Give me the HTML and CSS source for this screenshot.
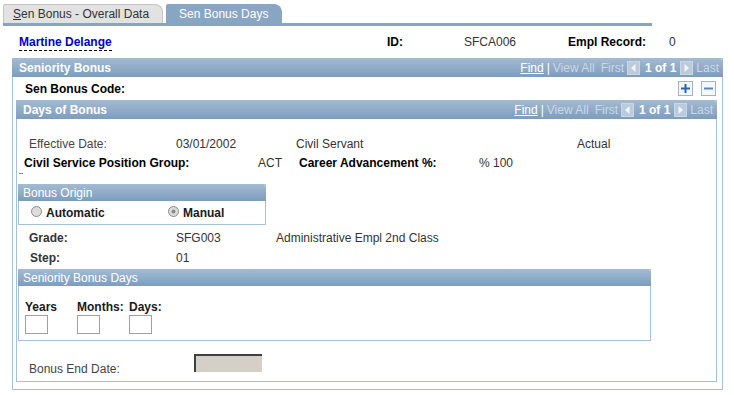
FILE: index.html
```html
<!DOCTYPE html>
<html>
<head>
  <title>Sen Bonus Days</title>
  <link rel="stylesheet" href="styles.css">
</head>
<body>
  <div class="tabs">
    <div class="tab"><u>S</u>en Bonus - Overall Data</div>
    <div class="tab active">Sen Bonus Days</div>
  </div>
  <div class="tabbar"></div>

  <div class="keyrow">
    <span class="key-name"><a class="name">Martine Delange</a></span>
    <span class="key-id lbl">ID:</span>
    <span class="key-idv">SFCA006</span>
    <span class="key-rec lbl">Empl Record:</span>
    <span>0</span>
  </div>

  <div class="box outer">
    <div class="hdr">
      <span>Seniority Bonus</span>
      <span class="nav">
        <a class="find">Find</a><span class="sep">|</span><span class="dim">View All</span>
        <span class="dim first">First</span>
        <svg class="arr" width="13" height="14" viewBox="0 0 13 14"><rect x="0.5" y="0.5" width="12" height="13" fill="#bccbdb" stroke="#cbd7e4"/><polygon points="8.5,3 8.5,11 4,7" fill="#f2f6fa"/></svg>
        <b class="count">1 of 1</b>
        <svg class="arr" width="13" height="14" viewBox="0 0 13 14"><rect x="0.5" y="0.5" width="12" height="13" fill="#bccbdb" stroke="#cbd7e4"/><polygon points="4.5,3 4.5,11 9,7" fill="#f2f6fa"/></svg>
        <span class="dim last">Last</span>
      </span>
    </div>
    <div class="coderow">
      <span class="lbl">Sen Bonus Code:</span>
      <span class="btns">
        <svg width="15" height="15" viewBox="0 0 15 15"><rect x="0.5" y="0.5" width="14" height="14" fill="#f4f7fa" stroke="#9fb4c8"/><rect x="3" y="6.5" width="9" height="2" fill="#2e64a8"/><rect x="6.5" y="3" width="2" height="9" fill="#2e64a8"/></svg>
        <svg width="15" height="15" viewBox="0 0 15 15"><rect x="0.5" y="0.5" width="14" height="14" fill="#f4f7fa" stroke="#9fb4c8"/><rect x="3" y="6.5" width="9" height="2" fill="#5a86b8"/></svg>
      </span>
    </div>

    <div class="box inner">
      <div class="hdr">
        <span>Days of Bonus</span>
        <span class="nav">
          <a class="find">Find</a><span class="sep">|</span><span class="dim">View All</span>
          <span class="dim first">First</span>
          <svg class="arr" width="13" height="14" viewBox="0 0 13 14"><rect x="0.5" y="0.5" width="12" height="13" fill="#bccbdb" stroke="#cbd7e4"/><polygon points="8.5,3 8.5,11 4,7" fill="#f2f6fa"/></svg>
          <b class="count">1 of 1</b>
          <svg class="arr" width="13" height="14" viewBox="0 0 13 14"><rect x="0.5" y="0.5" width="12" height="13" fill="#bccbdb" stroke="#cbd7e4"/><polygon points="4.5,3 4.5,11 9,7" fill="#f2f6fa"/></svg>
          <span class="dim last">Last</span>
        </span>
      </div>

      <div class="body">
        <div class="row r1">
          <span class="c147 soft">Effective Date:</span>
          <span class="c120">03/01/2002</span>
          <span class="c281">Civil Servant</span>
          <span>Actual</span>
        </div>
        <div class="row r2">
          <span class="c234 lbl">Civil Service Position Group:</span>
          <span class="c41">ACT</span>
          <span class="c180 lbl">Career Advancement %:</span>
          <span>% 100</span>
        </div>
        <div class="mark"></div>

        <div class="box group origin">
          <div class="hdr small">Bonus Origin</div>
          <div class="radios">
            <span class="radio c137">
              <svg width="11" height="11" viewBox="0 0 11 11"><circle cx="5.5" cy="5.5" r="5" fill="#dcdcdc" stroke="#8c8c8c"/></svg>
              <b>Automatic</b>
            </span>
            <span class="radio">
              <svg width="11" height="11" viewBox="0 0 11 11"><circle cx="5.5" cy="5.5" r="5" fill="#dcdcdc" stroke="#8c8c8c"/><circle cx="5.5" cy="5.5" r="2" fill="#8a8a8a"/></svg>
              <b>Manual</b>
            </span>
          </div>
        </div>

        <div class="row">
          <span class="c147 lbl grey">Grade:</span>
          <span class="c100">SFG003</span>
          <span>Administrative Empl 2nd Class</span>
        </div>
        <div class="row">
          <span class="c146 lbl grey step">Step:</span>
          <span>01</span>
        </div>

        <div class="box group days">
          <div class="hdr small">Seniority Bonus Days</div>
          <div class="daygrid">
            <div class="dayfield c52"><b>Years</b><span class="input"></span></div>
            <div class="dayfield c52"><b>Months:</b><span class="input"></span></div>
            <div class="dayfield"><b>Days:</b><span class="input"></span></div>
          </div>
        </div>

        <div class="endrow">
          <span class="c165 soft">Bonus End Date:</span>
          <span class="readonly"></span>
        </div>
      </div>
    </div>
  </div>
</body>
</html>
```

FILE: styles.css
```css
body {
  margin: 0;
  font-family: "Liberation Sans", Arial, sans-serif;
  font-size: 12px;
  color: #333333;
  background-color: #ffffff;
}
.lbl { font-weight: bold; color: #000000; }
.grey { color: #333333; }
.soft { color: #444444; }

/* tabs */
.tabs {
  display: flex;
  gap: 3px;
  padding: 4px 0 0 3px;
  height: 19px;
}
.tab {
  padding: 0 13px 0 9px;
  line-height: 19px;
  font-size: 12px;
  color: #333333;
  background-color: #e2e2e2;
  border: 1px solid #c4c4c4;
  border-bottom: none;
  border-radius: 2px 8px 0 0;
  height: 19px;
  box-sizing: border-box;
}
.tab.active {
  background-color: #88a6c4;
  border-color: #88a6c4;
  color: #ffffff;
  padding: 0 12px;
  width: 116px;
}
.tabbar {
  margin-left: 3px;
  width: 649px;
  height: 3px;
  background-color: #8aa4bc;
}

/* key row */
.keyrow {
  display: flex;
  align-items: center;
  height: 32px;
  padding-left: 19px;
  white-space: nowrap;
}
.key-name { width: 368px; }
.name {
  font-weight: bold;
  color: #0000cc;
  border-bottom: 1px dashed #000000;
  padding-bottom: 1px;
}
.key-id { width: 77px; }
.key-idv { width: 104px; }
.key-rec { width: 101px; }

/* boxes */
.box {
  border: 1px solid #a6c0da;
  box-sizing: border-box;
}
.outer {
  margin-left: 12px;
  width: 711px;
  height: 332px;
  padding-bottom: 6px;
}
.hdr {
  display: flex;
  justify-content: space-between;
  align-items: center;
  height: 19px;
  padding-left: 7px;
  padding-right: 4px;
  background: linear-gradient(#a3bbd2, #7d9dbd);
  border-radius: 0 5px 0 0;
  color: #ffffff;
  font-weight: bold;
  margin: -1px -1px 0 -1px;
  white-space: nowrap;
}
.hdr.small {
  height: 17px;
  padding-left: 5px;
  font-weight: normal;
  font-size: 12px;
}
.nav {
  display: flex;
  align-items: center;
  font-weight: normal;
}
.find { color: #ffffff; text-decoration: underline; }
.sep { color: #ffffff; margin: 0 3px 0 3px; }
.dim { color: #ccd8e4; }
.first { margin-left: 6px; margin-right: 3px; }
.count { color: #ffffff; font-weight: bold; margin: 0 4px 0 5px; }
.last { margin-left: 3px; }
.arr { display: block; }

.coderow {
  display: flex;
  justify-content: space-between;
  align-items: center;
  height: 23px;
  padding: 0 6px 0 12px;
}
.btns { display: flex; gap: 8px; }
.btns svg { display: block; }

.inner {
  margin-left: 3px;
  width: 701px;
  height: 282px;
}
.body { padding: 15px 0 0 1px; }
.row {
  display: flex;
  height: 20px;
  line-height: 20px;
  padding-left: 11px;
  white-space: nowrap;
}
.row.r2 { padding-left: 6px; height: 19px; line-height: 19px; }
.mark {
  width: 4px;
  height: 1px;
  background-color: #8a8a8a;
  margin: 0 0 10px 1px;
}
.c41 { width: 41px; }
.c52 { width: 52px; }
.c100 { width: 100px; }
.c120 { width: 120px; }
.c137 { width: 137px; }
.c146 { width: 146px; }
.c147 { width: 147px; }
.c165 { width: 165px; }
.c180 { width: 180px; }
.c234 { width: 234px; }
.c281 { width: 281px; }
.step { margin-left: 1px; }

.group { margin-left: 0; }
.origin {
  width: 248px;
  height: 41px;
  margin-bottom: 3px;
}
.radios {
  display: flex;
  align-items: center;
  height: 23px;
  padding-left: 12px;
}
.radio {
  display: flex;
  align-items: center;
  gap: 4px;
  color: #1a1a1a;
}
.radio svg { margin-top: -3px; }

.days {
  width: 633px;
  height: 72px;
  margin-top: 1px;
}
.daygrid {
  display: flex;
  padding: 14px 0 0 6px;
}
.dayfield {
  display: flex;
  flex-direction: column;
  gap: 1px;
  color: #1a1a1a;
}
.input {
  display: block;
  width: 21px;
  height: 17px;
  border: 1px solid #a0a0a0;
}

.endrow {
  display: flex;
  align-items: flex-start;
  padding: 13px 0 0 11px;
}
.endrow .soft { padding-top: 8px; }
.readonly {
  display: block;
  width: 68px;
  height: 18px;
  background-color: #d4d0c8;
  border-top: 2px solid #404040;
  border-left: 2px solid #404040;
  box-sizing: border-box;
}
```
